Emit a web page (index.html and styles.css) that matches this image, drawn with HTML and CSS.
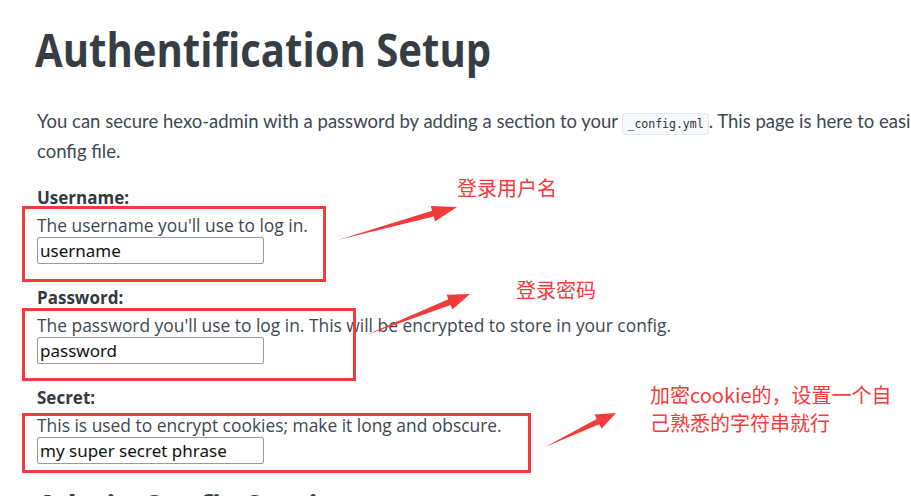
FILE: index.html
```html
<!DOCTYPE html>
<html lang="en">
<head>
<meta charset="utf-8">
<title>Authentification Setup</title>
<link rel="stylesheet" href="styles.css">
</head>
<body>
<div class="page">
  <h1 class="title"><span class="title-text">Authentification Setup</span></h1>
  <p class="intro">You can secure hexo-admin with a password by adding a section to your <code class="code">_config.yml</code>. This page is here to easily help you generate that config file.</p>

  <div class="section">
    <label class="label">Username:</label>
    <p class="desc">The username you'll use to log in.</p>
    <input class="field" type="text" value="username">
  </div>
  <div class="section">
    <label class="label">Password:</label>
    <p class="desc">The password you'll use to log in. This will be encrypted to store in your config.</p>
    <input class="field" type="text" value="password">
  </div>
  <div class="section">
    <label class="label">Secret:</label>
    <p class="desc">This is used to encrypt cookies; make it long and obscure.</p>
    <input class="field" type="text" value="my super secret phrase">
  </div>

  <h2 class="subtitle">Admin Config Section</h2>
</div>

<div class="notes">
  <div class="box box-user"></div>
  <div class="box box-pass"></div>
  <div class="box box-secret"></div>
  <svg class="arrows" width="911" height="496" viewBox="0 0 911 496">
    <polygon points="338,240 433.7,216.6 435,221.4 457,207 430.8,206 432.1,210.8"/>
    <polygon points="366,335 450.6,304.9 452.4,309.5 470,294 446.6,294.7 448.4,299.3"/>
    <polygon points="545,447 599.3,424.3 601.5,428.8 616,413 594.5,414.4 596.7,418.9"/>
  </svg>
  <div class="note note-user">登录用户名</div>
  <div class="note note-pass">登录密码</div>
  <div class="note note-secret">加密cookie的，设置一个自<br>己熟悉的字符串就行</div>
</div>
</body>
</html>
```

FILE: styles.css
```css
html, body {
  margin: 0;
  padding: 0;
  background: #ffffff;
  overflow: hidden;
  width: 911px;
  height: 496px;
}

body {
  position: relative;
  font-family: "Open Sans", "Noto Sans", sans-serif;
  color: #3a434c;
}

.page {
  width: 1200px;
  padding: 0 0 0 37px;
  box-sizing: border-box;
}

.title {
  margin: 0 0 0 -2px;
  padding-top: 19px;
  font-size: 47px;
  line-height: 60px;
  font-weight: 700;
  color: #363d44;
}

.title-text {
  display: inline-block;
  transform: scaleX(0.853);
  transform-origin: left center;
}

.intro {
  margin: 27px 0 0 0;
  font-family: Lato, "Open Sans", sans-serif;
  font-size: 18.5px;
  line-height: 30px;
  color: #3d4852;
  width: 1110px;
}

.code {
  font-family: "DejaVu Sans Mono", "Liberation Mono", monospace;
  font-size: 11.5px;
  line-height: 1;
  background: #f6f8fa;
  border: 1px solid #e3e8ee;
  border-radius: 3px;
  padding: 3px 4px;
  color: #333;
}

.section {
  display: flex;
  flex-direction: column;
  align-items: flex-start;
  margin-top: 21px;
}

.section + .section {
  margin-top: 23px;
}

.label {
  font-size: 17px;
  font-weight: 700;
  line-height: 22px;
  color: #333a40;
}

.desc {
  margin: 5px 0 0 0;
  font-size: 17.4px;
  line-height: 22px;
  color: #3d4852;
}

.field {
  margin: 1px 0 0 0;
  width: 227px;
  height: 27px;
  box-sizing: border-box;
  border: 1px solid #9a9aa6;
  border-radius: 2px;
  padding: 0 2px;
  font-family: "Noto Sans", "Open Sans", sans-serif;
  font-size: 17px;
  color: #111;
  background: #fff;
}

.subtitle {
  margin: 22px 0 0 0;
  font-size: 30px;
  line-height: 40px;
  font-weight: 700;
  color: #363d44;
}

.notes {
  position: absolute;
  left: 0;
  top: 0;
  width: 911px;
  height: 496px;
  pointer-events: none;
}

.box {
  position: absolute;
  border: 3px solid #f23b3b;
  box-sizing: border-box;
}

.box-user { left: 22px; top: 206px; width: 304px; height: 76px; }
.box-pass { left: 22px; top: 308px; width: 334px; height: 73px; }
.box-secret { left: 22px; top: 413px; width: 509px; height: 60px; }

.arrows {
  position: absolute;
  left: 0;
  top: 0;
}

.arrows polygon {
  fill: #f23b3b;
}

.note {
  position: absolute;
  font-family: "Noto Sans CJK SC", "Noto Sans", sans-serif;
  font-size: 20px;
  line-height: 28px;
  color: #f23b3b;
}

.note-user { left: 457px; top: 174px; }
.note-pass { left: 516px; top: 276px; }
.note-secret { left: 650px; top: 381px; }
```
